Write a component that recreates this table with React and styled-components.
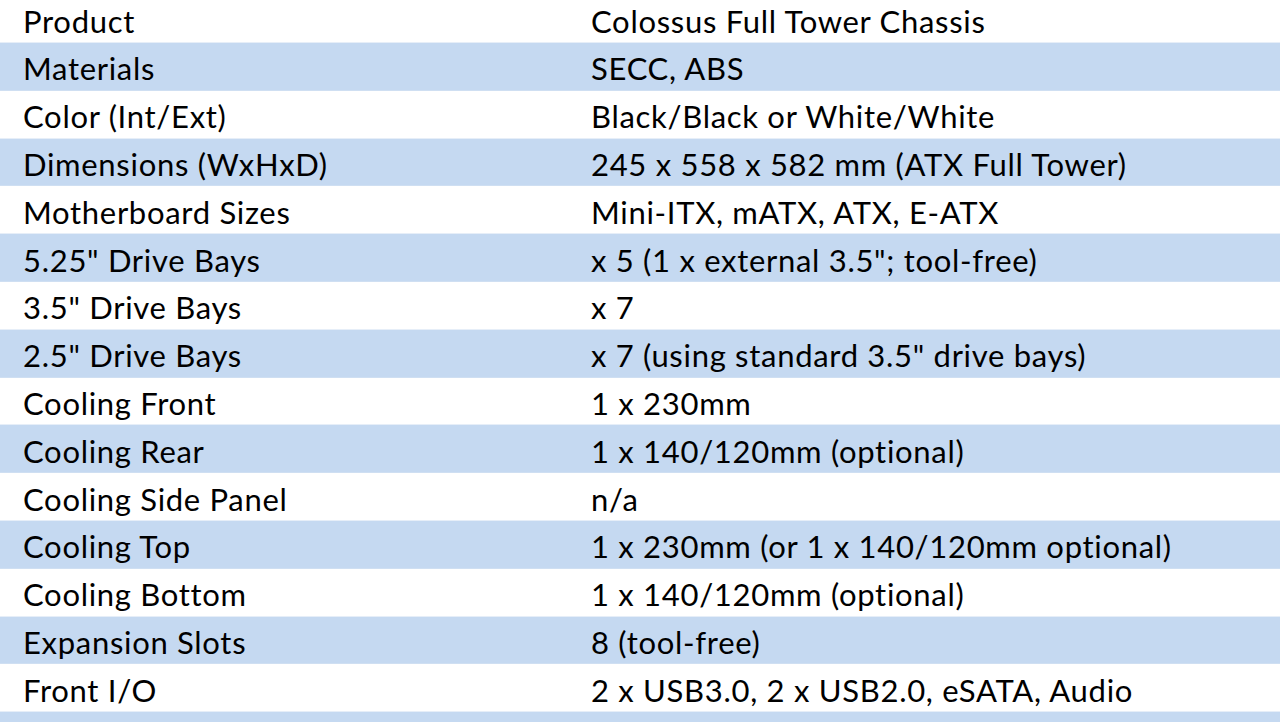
import React from 'react';
import styled, {createGlobalStyle} from "styled-components";

const GlobalStyle = createGlobalStyle`
  html, body {
    margin: 0;
    padding: 0;
    background: #fff;
    overflow: hidden;
  }
`

const specs = [
    ["Product", "Colossus Full Tower Chassis"],
    ["Materials", "SECC, ABS"],
    ["Color (Int/Ext)", "Black/Black or White/White"],
    ["Dimensions (WxHxD)", "245 x 558 x 582 mm (ATX Full Tower)"],
    ["Motherboard Sizes", "Mini-ITX, mATX, ATX, E-ATX"],
    ["5.25\" Drive Bays", "x 5 (1 x external 3.5\"; tool-free)"],
    ["3.5\" Drive Bays", "x 7"],
    ["2.5\" Drive Bays", "x 7 (using standard 3.5\" drive bays)"],
    ["Cooling Front", "1 x 230mm"],
    ["Cooling Rear", "1 x 140/120mm (optional)"],
    ["Cooling Side Panel", "n/a"],
    ["Cooling Top", "1 x 230mm (or 1 x 140/120mm optional)"],
    ["Cooling Bottom", "1 x 140/120mm (optional)"],
    ["Expansion Slots", "8 (tool-free)"],
    ["Front I/O", "2 x USB3.0, 2 x USB2.0, eSATA, Audio"],
    ["", ""],
];

const App = () => {
    return (
        <>
            <GlobalStyle/>
            <SpecTable>
                {specs.map(([label, value], i) => (
                    <Row key={i} $shaded={i % 2 === 1}>
                        <Cell>{label}</Cell>
                        <Cell>{value}</Cell>
                    </Row>
                ))}
            </SpecTable>
        </>
    );
};

const SpecTable = styled.div`
  width: 1280px;
  height: 722px;
  overflow: hidden;
  display: flex;
  flex-direction: column;
`

const Row = styled.div`
  flex: 0 0 47.8px;
  display: grid;
  grid-template-columns: 568px 1fr;
  align-items: center;
  padding-left: 23px;
  box-sizing: border-box;
  background-color: ${p => p.$shaded ? "#c5d9f1" : "#fff"};
  border-bottom: 1px solid ${p => p.$shaded ? "#cfdff2" : "#e6eef8"};

  &:first-child {
    margin-top: -4.8px;
  }
`

const Cell = styled.div`
  font-family: Lato, "Open Sans", sans-serif;
  font-size: 31px;
  letter-spacing: 0.7px;
  color: #000;
  white-space: nowrap;
  padding-top: 4px;
`

export default App;
